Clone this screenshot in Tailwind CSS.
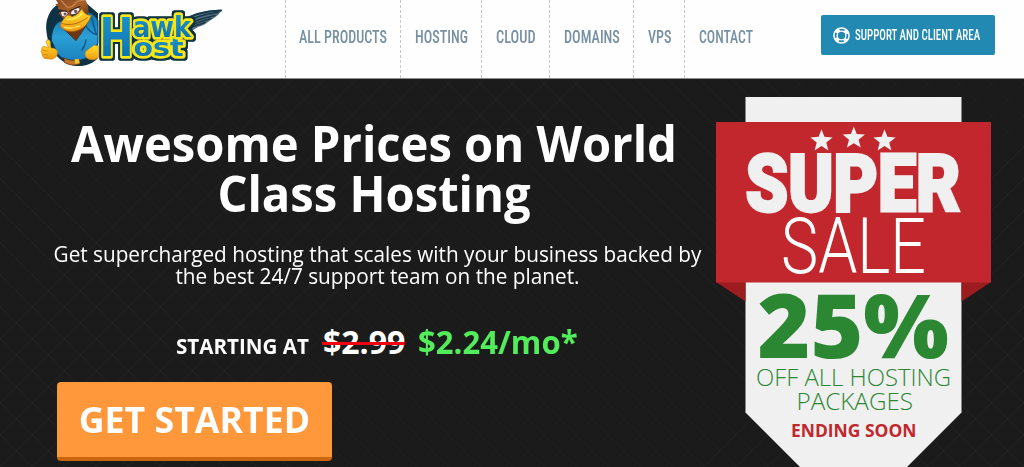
<!DOCTYPE html>
<html lang="en">
<head>
<meta charset="utf-8">
<title>Hawk Host</title>
<script src="https://cdn.jsdelivr.net/npm/@tailwindcss/browser@4"></script>
</head>
<body class="w-[1024px] h-[467px] overflow-hidden bg-[#1b1b1b] font-['Open_Sans',sans-serif]">
<header class="flex h-[79px] items-start border-b border-[#8d8d8d] bg-[#fefefe]">
  <a class="ml-9 mr-[61px] block h-[70px] w-[188px] shrink-0" aria-label="Hawk Host">
    <svg width="188" height="70" viewBox="0 0 188 70">
      <defs>
        <linearGradient id="shirt" x1="0" y1="0" x2="0" y2="1"><stop offset="0" stop-color="#1272ac"/><stop offset=".5" stop-color="#2b9fd6"/><stop offset="1" stop-color="#1b82bd"/></linearGradient>
        <linearGradient id="letter" x1="0" y1="0" x2="0" y2="1"><stop offset="0" stop-color="#1d9ad2"/><stop offset="1" stop-color="#0b6ba8"/></linearGradient>
        <linearGradient id="gold" x1="0" y1="0" x2="0" y2="1"><stop offset="0" stop-color="#ffe32b"/><stop offset="1" stop-color="#f09a13"/></linearGradient>
        <linearGradient id="brown" x1="0" y1="0" x2="1" y2="1"><stop offset="0" stop-color="#8a4a22"/><stop offset=".5" stop-color="#a8602b"/><stop offset="1" stop-color="#5c2b12"/></linearGradient>
        <filter id="rim" x="-10%" y="-15%" width="120%" height="130%">
          <feMorphology in="SourceAlpha" operator="dilate" radius="2.200" result="wide"/>
          <feGaussianBlur in="wide" stdDeviation=".5" result="soft"/>
          <feFlood flood-color="#0d3440"/>
          <feComposite in2="soft" operator="in" result="edge"/>
          <feMerge><feMergeNode in="edge"/><feMergeNode in="edge"/><feMergeNode in="SourceGraphic"/></feMerge>
        </filter>
      </defs>
      <g transform="scale(.3333)" stroke-linejoin="round" stroke-linecap="round">
        <path d="M66 12C38 32 26 62 32 100c6 48 38 92 88 98 30 2 52-8 66-24V40L140 0H84z" fill="#0c3243"/>
        <path d="M78 62C58 66 46 88 46 122l14 28c6 20 22 30 50 32 24 2 44-6 54-22l22-30V62c-8-16-20-24-32-26z" fill="url(#shirt)" stroke="#0b3c5a" stroke-width="3"/>
        <path d="M142 64c8 20 26 38 40 40M150 120c-2 14-6 22-12 30" fill="none" stroke="#0d527e" stroke-width="4"/>
        <path d="M164 50c10 18 10 34 16 50" fill="none" stroke="#0e5c8b" stroke-width="5"/>
        <path d="M84 88l36 34 14-20 22-36-6-20z" fill="#6d3716" stroke="#4a230e" stroke-width="2"/>
        <path d="M60 0l6 10-8 4 10 6-4 4 12 10-8 6 14 16 50-20 24 10c4-18 0-34-8-46z" fill="url(#brown)"/>
        <path d="M76 2l18 20 14-2L124 4l20-4" fill="none" stroke="#c98648" stroke-width="4"/>
        <path d="M74 36l16-5 6 10-8 11-10-3z" fill="#f4f1ee" stroke="#40200f" stroke-width="2"/>
        <path d="M104 38c4-12 14-18 28-14-1 12-10 20-26 20z" fill="#f4f1ee" stroke="#40200f" stroke-width="2"/>
        <circle cx="87" cy="42" r="4.500" fill="#6d4a69"/><circle cx="119" cy="34" r="5" fill="#6d4a69"/>
        <path d="M70 30l22 4M100 34l32-15" stroke="#40200f" stroke-width="3.500"/>
        <path d="M88 50c8-8 14-4 20 0 14-4 24-14 30-24 4 12 12 20 28 20-10 30-30 46-54 48-20 2-36-8-38-16-2-8 6-16 14-28z" fill="url(#gold)" stroke="#b56711" stroke-width="2"/>
        <path d="M78 71c24 6 50 2 76-18" fill="none" stroke="#b86a0e" stroke-width="3"/>
        <path d="M86 82c14 4 30 2 44-4M92 58c18 2 32-4 46-16" fill="none" stroke="#fff06a" stroke-width="4"/>
        <path d="M34 120c5-2 9 2 9 8l1 16c10 0 20 4 20 12 2 12-8 20-18 22l-20-3c-8-4-6-10-8-14-3-4-4-10 0-12-3-5 0-9 6-10l14 4-6-12c-2-5-2-9 2-11z" fill="url(#gold)" stroke="#d68a1a" stroke-width="2"/>
        <path d="M18 150l16 3M20 163l14 2M26 174l12-1" stroke="#c97c15" stroke-width="2"/>
        <path d="M84 174c16 8 30 8 46 4l2 14c-18 6-32 3-46-4z" fill="#c0762b" stroke="#5c2b12" stroke-width="2"/>
        <path d="M116 178l12-2 3 13-14 2z" fill="#f6c52b"/>
        <path d="M150 154l24-18 14 2v34c-8 8-20 9-30 5-8-2-14-14-8-23z" fill="url(#gold)" stroke="#d68a1a" stroke-width="2"/>
      </g>
      <path d="M146 21C158 13 170 10 186 9.800C184 14 179 18 174 20.500C170 24 166 26 162 27L154 32L148 26z" fill="#587080"/>
      <g fill="none" stroke="#17384a" stroke-linecap="round">
        <path d="M145 22C156 14 168 11 185 10.500" stroke-width="1.800"/>
        <path d="M147 24C157 17 170 14 182 12.500" stroke-width="1.500"/>
        <path d="M148 26C158 20 168 18 179 15.500" stroke-width="1.500"/>
        <path d="M149 28C158 23 166 21.500 175 18.500" stroke-width="1.500"/>
        <path d="M150 30C156 26 163 25 169 22.500" stroke-width="1.500"/>
        <path d="M143 26l8-7 8-2-4 14-7 1z" fill="#17384a"/>
      </g>
      <g filter="url(#rim)" font-family="DejaVu Sans, sans-serif" font-weight="700" fill="url(#letter)" stroke="#f5e616" stroke-width="5" stroke-linejoin="round" paint-order="stroke">
        <text x="97.500" y="55.500" font-size="25" textLength="50" lengthAdjust="spacingAndGlyphs">ost</text>
        <text x="97" y="36.500" font-size="28" textLength="58" lengthAdjust="spacingAndGlyphs">awk</text>
        <text x="63.500" y="55.500" font-size="54" textLength="34" lengthAdjust="spacingAndGlyphs">H</text>
      </g>
    </svg>
  </a>
  <nav class="flex h-[78px] shrink-0 font-[Roboto,sans-serif] text-[18px] leading-[74px] font-medium text-[#7791a3] [font-stretch:75%] *:border-l *:border-dashed *:border-[#c6c6c6] *:pl-[13px] *:whitespace-nowrap">
    <a class="w-[115px]"><span class="inline-block origin-left scale-x-[.785]">ALL PRODUCTS</span></a>
    <a class="w-[81px]"><span class="ml-px inline-block origin-left scale-x-[.785]">HOSTING</span></a>
    <a class="w-[68px]"><span class="ml-px inline-block origin-left scale-x-[.8]">CLOUD</span></a>
    <a class="w-[84px]"><span class="ml-px inline-block origin-left scale-x-[.79]">DOMAINS</span></a>
    <a class="w-[51px]"><span class="ml-px inline-block origin-left scale-x-[.785]">VPS</span></a>
    <a class="w-[137px]"><span class="ml-px inline-block origin-left scale-x-[.765]">CONTACT</span></a>
  </nav>
  <a class="mt-[15px] flex h-10 w-[174px] shrink-0 items-center rounded-[2px] bg-[#2289b2] pl-[12px] text-white">
    <svg class="mr-[5px] shrink-0" width="17" height="18" viewBox="0 0 17 18" fill="none">
      <circle cx="8.500" cy="9.500" r="7.600" stroke="#fff" stroke-width="1.500"/>
      <circle cx="8.500" cy="9.500" r="4.400" stroke="#fff" stroke-width="1.300"/>
      <circle cx="8.500" cy="9.500" r="5.900" stroke="#fff" stroke-width="3.600" stroke-dasharray="4.630 4.637" stroke-dashoffset="2.315" transform="rotate(45 8.500 9.500)"/>
    </svg>
    <span class="mt-px origin-left scale-x-[.73] font-[Roboto,sans-serif] text-[15px] leading-none font-medium whitespace-nowrap [font-stretch:75%]">SUPPORT AND CLIENT AREA</span>
  </a>
</header>
<main class="flex h-[388px] bg-[repeating-linear-gradient(45deg,#ffffff04_0_1px,transparent_1px_22.600px),repeating-linear-gradient(-45deg,#ffffff04_0_1px,transparent_1px_22.600px)]">
  <section class="ml-[34px] flex w-[682px] shrink-0 flex-col text-white">
    <h1 class="mt-[39px] ml-[-2px] scale-x-[.943] text-center text-[50px] leading-[50px] font-bold whitespace-nowrap">Awesome Prices on World<br>Class Hosting</h1>
    <p class="-mr-5 -ml-[15px] mt-[24px] scale-x-[.943] text-center text-[22px] leading-[22px] whitespace-nowrap">Get supercharged hosting that scales with your business backed by<br>the best 24/7 support team on the planet.</p>
    <div class="mt-[34px] ml-[142px] flex h-[44px] items-baseline leading-[44px] font-bold whitespace-nowrap">
      <span class="w-[147px] origin-left scale-x-[.98] text-[21px]">STARTING AT</span>
      <span class="relative w-[95px] text-[32px]">$2.99<i class="absolute top-[22px] left-[-1px] h-[3px] w-[83px] bg-[#f0000c]"></i></span>
      <span class="origin-left scale-x-[.972] text-[32px] text-[#53ec5b]">$2.24/mo*</span>
    </div>
    <a class="mt-[18px] ml-[23px] flex h-[79px] w-[275px] justify-center rounded-[4px] border-b-4 border-[#cc660e] bg-[#ff983b] text-[35px] leading-[75px] font-bold"><span class="scale-x-[1.020]">GET STARTED</span></a>
  </section>
  <aside class="shrink-0">
    <svg class="block" width="276" height="388" viewBox="716 79 276 388">
      <path d="M745.500 97h216v315.500L906.500 467.500h-106L745.500 412.500z" fill="#f0f0f0"/>
      <path d="M716 282h29.500v19.500zM991 282h-29.500v19.500z" fill="#9c1c20"/>
      <path d="M716 122h275v160.500H716z" fill="#c1272d"/>
      <g fill="#f0f0f0">
        <path id="star" d="M821.500 129.300l2.900 7.500 8.200.6-6.300 5.100 2.100 7.900-6.900-4.300-6.900 4.300 2.100-7.900-6.300-5.100 8.200-.6z"/>
        <use href="#star" x="32.300" y="-2.800"/>
        <use href="#star" x="63" y="0"/>
      </g>
      <text x="745.500" y="211" font-family="Roboto" font-weight="900" font-size="79" textLength="215" lengthAdjust="spacingAndGlyphs" fill="#f0f0f0" stroke="#f0f0f0" stroke-width="3">SUPER</text>
      <text x="781" y="273.300" font-family="Roboto" font-weight="300" font-size="78" textLength="145" lengthAdjust="spacingAndGlyphs" fill="#fff">SALE</text>
      <g font-family="Open Sans">
        <text x="757.500" y="358" font-weight="800" font-size="89" textLength="191.500" lengthAdjust="spacingAndGlyphs" fill="#2c8733">25%</text>
        <text x="756" y="386.300" font-weight="300" font-size="24" textLength="195" lengthAdjust="spacingAndGlyphs" fill="#2c8733">OFF ALL HOSTING</text>
        <text x="796.500" y="409.800" font-weight="300" font-size="24" textLength="116.500" lengthAdjust="spacingAndGlyphs" fill="#2c8733">PACKAGES</text>
        <text x="791" y="436.800" font-weight="700" font-size="17" textLength="125.500" lengthAdjust="spacingAndGlyphs" fill="#c1272d">ENDING SOON</text>
      </g>
    </svg>
  </aside>
</main>
</body>
</html>
